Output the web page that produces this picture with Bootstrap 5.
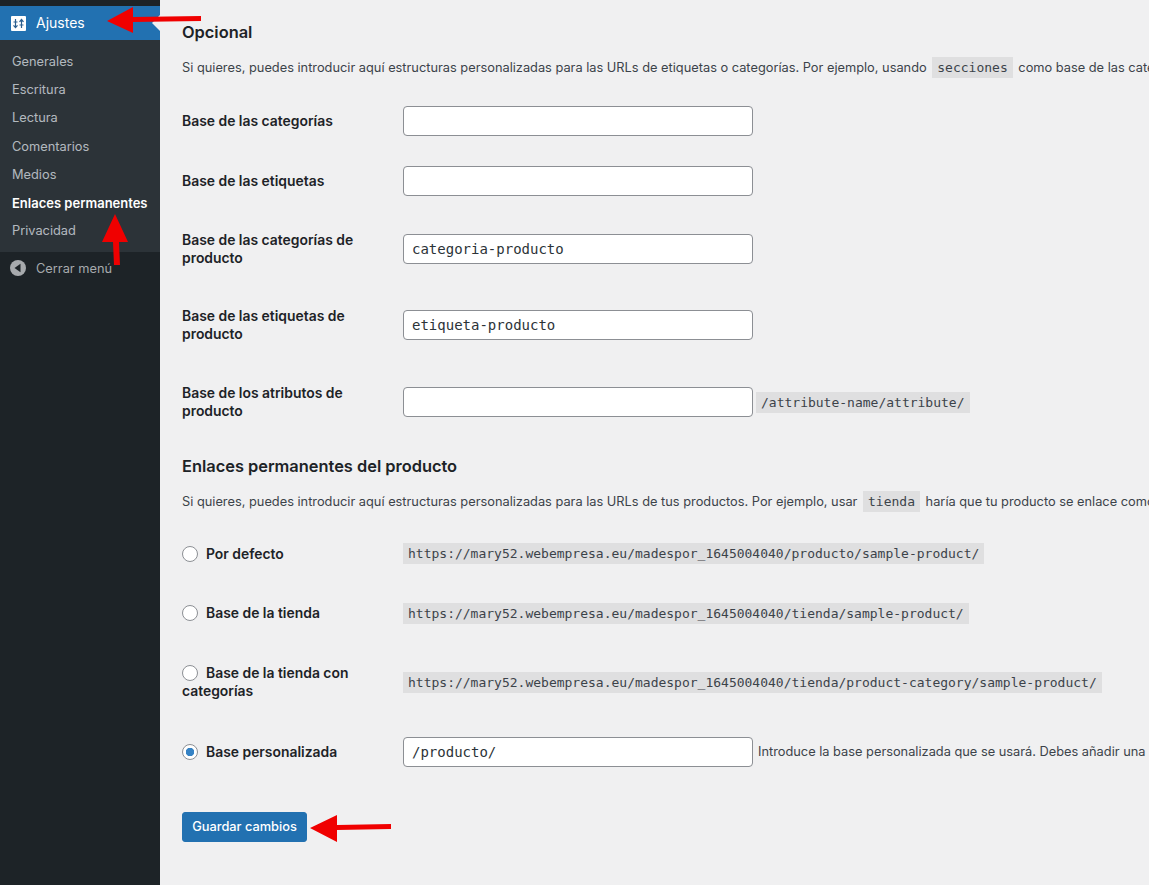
<!DOCTYPE html>
<html lang="es">

<head>
    <meta charset="UTF-8" />
    <title>Enlaces permanentes</title>
    <link href="https://cdn.jsdelivr.net/npm/bootstrap@5.3.3/dist/css/bootstrap.min.css" rel="stylesheet">
    <style>
        html, body {
            height: 100%;
            overflow: hidden;
        }

        body {
            background: #f0f0f1;
            color: #1d2327;
            font-family: Inter, "Liberation Sans", sans-serif;
            font-size: 12.8px;
            line-height: 18px;
        }

        .wp-shell {
            height: 885px;
        }

        /* menu lateral */
        .wp-side {
            width: 160px;
            flex: 0 0 160px;
            background: #1d2327;
            padding-top: 6px;
        }

        .wp-current {
            height: 34px;
            background: #2271b1;
            color: #fff;
            font-size: 14px;
            padding-left: 11px;
            gap: 10px;
        }

        .wp-current::after {
            content: "";
            position: absolute;
            right: 0;
            top: 9px;
            border: 8px solid transparent;
            border-right-color: #f0f0f1;
        }

        .wp-sub {
            background: #2c3338;
            padding: 8px 0 6px;
            height: 212px;
        }

        .wp-sub a {
            display: block;
            height: 28.2px;
            line-height: 28px;
            padding-left: 12px;
            color: rgba(240, 246, 252, .7);
            text-decoration: none;
            white-space: nowrap;
        }

        .wp-sub a.active {
            color: #fff;
            font-size: 13px;
            font-weight: 600;
        }

        .wp-collapse {
            color: #a7aaad;
            padding: 8px 0 0 10px;
            gap: 10px;
            height: 34px;
        }

        /* contenido */
        .wp-main {
            padding: 22px 0 0 22px;
            min-width: 0;
            flex: 1;
            overflow: hidden;
        }

        .wp-title {
            font-size: 16.4px;
            font-weight: 600;
            line-height: 20px;
            margin: 0;
        }

        .wp-title-next {
            margin-top: 16px;
        }

        .wp-intro {
            color: #3c434a;
            white-space: nowrap;
            margin: 17px 0 14px;
        }

        .wp-intro-next {
            margin-bottom: 13px;
        }

        .wp-code {
            font-family: "DejaVu Sans Mono", "Liberation Mono", monospace;
            font-size: 13px;
            line-height: 15px;
            color: #3c434a;
            background: rgba(0, 0, 0, .07);
            padding: 3px 5px;
            margin: 0 2px;
            white-space: nowrap;
        }

        .wp-code-url {
            margin: 0;
        }

        .wp-code-after {
            margin-left: 3px;
        }

        .wp-row {
            min-height: 60px;
            white-space: nowrap;
        }

        .wp-row-short {
            min-height: 59px;
        }

        .wp-row-gap1 {
            margin-top: 1px;
        }

        .wp-row-gap2 {
            margin-top: 2px;
        }

        .wp-label {
            width: 221px;
            flex: 0 0 221px;
            padding: 20px 21px 20px 0;
            font-size: 13.9px;
            font-weight: 600;
            white-space: normal;
        }

        .wp-input {
            width: 350px;
            flex: 0 0 350px;
            height: 30px;
            padding: 0 8px;
            font-family: "DejaVu Sans Mono", "Liberation Mono", monospace;
            font-size: 14px;
            color: #2c3338;
            border: 1px solid #8c8f94;
            border-radius: 4px;
        }

        .wp-hint {
            margin-left: 5px;
            color: #3c434a;
        }

        .wp-radio {
            width: 16px;
            height: 16px;
            margin: 0 8px 0 0;
            float: none;
            vertical-align: -3px;
            border: 1px solid #8c8f94;
            background-color: #fff;
        }

        .wp-radio:checked {
            background-color: #fff;
            border-color: #8c8f94;
            background-image: radial-gradient(circle, #3582c4 0, #3582c4 4px, transparent 4.5px);
        }

        .wp-save {
            background: #2271b1;
            border: 1px solid #2271b1;
            border-radius: 3px;
            color: #fff;
            font-size: 12.8px;
            font-weight: 500;
            line-height: 18px;
            height: 30px;
            margin-top: 30px;
            padding: 0;
            width: 125px;
            white-space: nowrap;
        }

        .wp-arrows {
            position: absolute;
            left: 0;
            top: 0;
            overflow: visible;
        }
    </style>
</head>

<body>
    <div class="wp-shell d-flex position-relative">
        <nav class="wp-side">
            <div class="wp-current d-flex align-items-center position-relative">
                <svg width="15" height="15" viewBox="0 0 15 15">
                    <rect width="15" height="15" rx="1" fill="#fff" />
                    <path d="M4.5 3v9M2.5 6h4M10.5 3v9M8.5 5.8l2-2.3 2 2.3M2.5 9.3l2 2.3 2-2.3M8.5 9h4" fill="none" stroke="#2c5f8f" stroke-width="1.2" />
                </svg>
                <span>Ajustes</span>
            </div>
            <div class="wp-sub">
                <a href="#">Generales</a>
                <a href="#">Escritura</a>
                <a href="#">Lectura</a>
                <a href="#">Comentarios</a>
                <a href="#">Medios</a>
                <a href="#" class="active">Enlaces permanentes</a>
                <a href="#">Privacidad</a>
            </div>
            <div class="wp-collapse d-flex align-items-start">
                <svg width="16" height="16" viewBox="0 0 16 16" class="flex-shrink-0">
                    <circle cx="8" cy="8" r="8" fill="#a7aaad" />
                    <path d="M10.5 3.8v8.4L4.5 8z" fill="#1d2327" />
                </svg>
                <span>Cerrar menú</span>
            </div>
        </nav>

        <main class="wp-main">
            <h2 class="wp-title">Opcional</h2>
            <p class="wp-intro">Si quieres, puedes introducir aquí estructuras personalizadas para las URLs de etiquetas o categorías. Por ejemplo, usando <code class="wp-code">secciones</code> como base de las categorías harían que tus enlaces de categorías fuesen</p>

            <div class="wp-row d-flex align-items-center">
                <div class="wp-label">Base de las categorías</div>
                <input class="form-control wp-input" type="text">
            </div>
            <div class="wp-row d-flex align-items-center">
                <div class="wp-label">Base de las etiquetas</div>
                <input class="form-control wp-input" type="text">
            </div>
            <div class="wp-row d-flex align-items-center">
                <div class="wp-label">Base de las categorías de producto</div>
                <input class="form-control wp-input" type="text" value="categoria-producto">
            </div>
            <div class="wp-row d-flex align-items-center">
                <div class="wp-label">Base de las etiquetas de producto</div>
                <input class="form-control wp-input" type="text" value="etiqueta-producto">
            </div>
            <div class="wp-row wp-row-gap1 d-flex align-items-center">
                <div class="wp-label">Base de los atributos de producto</div>
                <input class="form-control wp-input" type="text">
                <code class="wp-code wp-code-after">/attribute-name/attribute/</code>
            </div>

            <h2 class="wp-title wp-title-next">Enlaces permanentes del producto</h2>
            <p class="wp-intro wp-intro-next">Si quieres, puedes introducir aquí estructuras personalizadas para las URLs de tus productos. Por ejemplo, usar <code class="wp-code">tienda</code> haría que tu producto se enlace como https://mary52.webempresa.eu/tienda/sample-product/</p>

            <div class="wp-row wp-row-short d-flex align-items-center">
                <label class="wp-label"><input class="form-check-input wp-radio" type="radio" name="base">Por defecto</label>
                <code class="wp-code wp-code-url">https://mary52.webempresa.eu/madespor_1645004040/producto/sample-product/</code>
            </div>
            <div class="wp-row d-flex align-items-center">
                <label class="wp-label"><input class="form-check-input wp-radio" type="radio" name="base">Base de la tienda</label>
                <code class="wp-code wp-code-url">https://mary52.webempresa.eu/madespor_1645004040/tienda/sample-product/</code>
            </div>
            <div class="wp-row wp-row-gap1 d-flex align-items-center">
                <label class="wp-label"><input class="form-check-input wp-radio" type="radio" name="base">Base de la tienda con categorías</label>
                <code class="wp-code wp-code-url">https://mary52.webempresa.eu/madespor_1645004040/tienda/product-category/sample-product/</code>
            </div>
            <div class="wp-row wp-row-gap2 d-flex align-items-center">
                <label class="wp-label"><input class="form-check-input wp-radio" type="radio" name="base" checked>Base personalizada</label>
                <input class="form-control wp-input" type="text" value="/producto/">
                <span class="wp-hint">Introduce la base personalizada que se usará. Debes añadir una base de enlace permanente.</span>
            </div>

            <button class="btn wp-save">Guardar cambios</button>
        </main>

        <!-- flechas rojas sobre la captura -->
        <svg class="wp-arrows" width="1" height="1">
            <g fill="#f00000">
                <path d="M107 21 133 7v10l68-1v5l-68 1v11z" />
                <path d="M115 214l13 28h-9l1 23h-6l-1-23h-11z" />
                <path d="M310 828l27-13v10l54-1v5l-54 1v12z" />
            </g>
        </svg>
    </div>

    <script src="https://cdn.jsdelivr.net/npm/bootstrap@5.3.3/dist/js/bootstrap.bundle.min.js"></script>
</body>

</html>
